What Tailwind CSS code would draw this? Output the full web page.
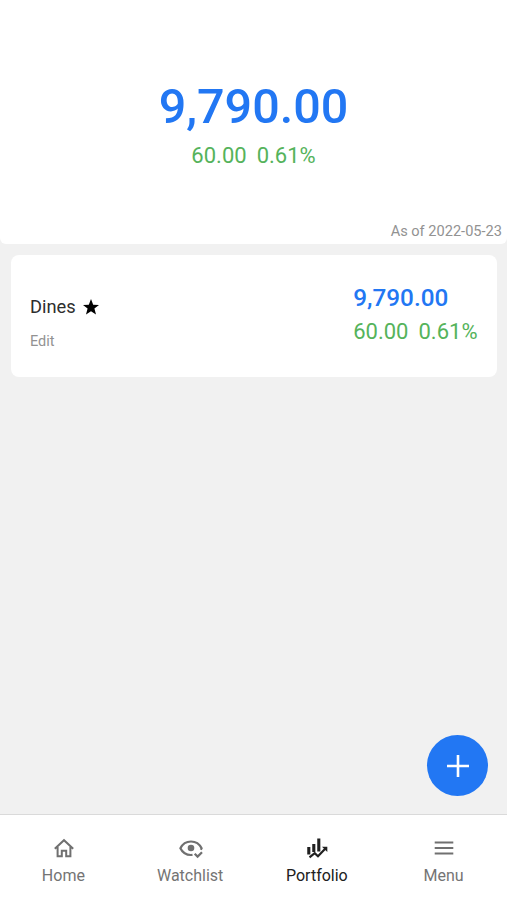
<!DOCTYPE html>
<html lang="en">
<head>
<meta charset="utf-8">
<title>Portfolio</title>
<script src="https://cdn.jsdelivr.net/npm/@tailwindcss/browser@4"></script>
</head>
<body class="relative flex h-[900px] w-[507px] flex-col overflow-hidden bg-[#f1f1f1] font-['Roboto',sans-serif]">
<header class="flex h-[244px] shrink-0 flex-col items-center rounded-b-md bg-white pt-[77px]">
  <div class="h-[60px] text-[48.5px] leading-[60px] font-medium whitespace-nowrap text-[#2277f3]">9,790.00</div>
  <div class="mt-[5px] flex gap-[10px] text-[22px] leading-[28px] text-[#55b35b]"><span>60.00</span><span>0.61%</span></div>
  <div class="mt-auto mb-[3px] self-end pr-[5px] text-[14.6px] leading-5 text-[#929292]">As of 2022-05-23</div>
</header>
<main class="flex-1 pt-[11px] pr-[10px] pl-[11px]">
  <section class="flex h-[122px] justify-between rounded-lg bg-white pr-[19.500px] pl-[19px]">
    <div class="pt-[40px]">
      <div class="flex items-center gap-[7px] text-[18.3px] leading-6 text-[#2e2e2e]"><span>Dines</span>
        <svg class="size-4" viewBox="0 0 16 16"><path d="M8 0l2.200 5.700 5.800.2-4.600 3.700 1.600 6L8 12.200l-5 3.400 1.600-6L0 5.900l5.800-.2z"/></svg>
      </div>
      <div class="mt-[13px] text-[14.5px] leading-5 text-[#929292]">Edit</div>
    </div>
    <div class="pt-[28px]">
      <div class="text-[24.3px] leading-[30px] font-medium text-[#2277f3]">9,790.00</div>
      <div class="mt-[5px] flex gap-[10px] text-[22px] leading-[28px] text-[#55b35b]"><span>60.00</span><span>0.61%</span></div>
    </div>
  </section>
</main>
<button class="absolute top-[735px] left-[427.400px] flex size-[61px] items-center justify-center rounded-full bg-[#2277f3]" aria-label="Add">
  <svg class="size-[22px]" viewBox="0 0 22 22" stroke="#fff" stroke-width="2.600"><path d="M11 0v22M0 11h22"/></svg>
</button>
<nav class="grid h-[86px] shrink-0 grid-cols-4 border-t border-[#dadada] bg-white pt-[21px] text-[16px] leading-5 text-[#747474]">
  <div class="flex flex-col items-center gap-[6px]">
    <svg class="ml-px size-6" viewBox="0 0 24 24" fill="none" stroke="#707070" stroke-width="2"><path d="M2.800 12.700L12 4.200l9.200 8.500M5.600 11v9.300h4.200v-5.500h4.400v5.500h4.200V11"/></svg>
    <span>Home</span>
  </div>
  <div class="flex flex-col items-center gap-[6px]">
    <svg class="ml-px size-6" viewBox="0 0 24 24" fill="none" stroke="#707070" stroke-width="2.200"><path d="M13.500 18.900C7.500 19.500 3.500 16.500 1.400 12.200 3.500 8 7.500 5.500 12 5.500s8.500 2.500 10.600 6.700l-.8 1.500"/><circle cx="12" cy="12" r="3.300" fill="#707070" stroke="none"/><path d="M15.700 17.700l2.900 2.900 4.400-4.400"/></svg>
    <span>Watchlist</span>
  </div>
  <div class="flex flex-col items-center gap-[6px] text-[#202020]">
    <svg class="size-6" viewBox="0 0 24 24" fill="none" stroke="#202020" stroke-width="2.200"><path d="M3.800 11v7.500M8.800 8v8M13.800 2.500v13" stroke-width="3.100"/><path d="M4.500 21.300l5.200-4.200 3.300 3.200 7.700-8"/><path d="M17 10.800h5.300v5.200z" fill="#202020" stroke="none"/></svg>
    <span>Portfolio</span>
  </div>
  <div class="flex flex-col items-center gap-[6px]">
    <svg class="size-6" viewBox="0 0 24 24" stroke="#707070" stroke-width="2"><path d="M2.700 6.500h18.600M2.700 12h18.600M2.700 17.500h18.600"/></svg>
    <span>Menu</span>
  </div>
</nav>
</body>
</html>
